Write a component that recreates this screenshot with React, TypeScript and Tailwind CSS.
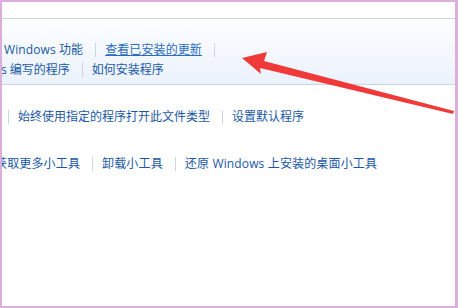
const FONT = { fontFamily: '"Open Sans", "Noto Sans CJK SC", sans-serif' };

function Sep() {
  return <span className="ml-[12px] mr-[9px] inline-block h-[14px] w-px shrink-0 bg-[#cdd4de]" />;
}

function Link({ children, under }: { children: React.ReactNode; under?: boolean }) {
  return (
    <span className={under ? 'shrink-0 text-[#2a6cc0] underline underline-offset-1' : 'shrink-0 text-[#1a58a6]'}>
      {children}
    </span>
  );
}

export default function App() {
  return (
    <div className="relative h-[308px] w-[458px] overflow-hidden border-b-2 border-l-2 border-r-[3px] border-t-2 border-[#dcaedc] bg-white text-[12px] leading-[20px]" style={FONT}>
      <div className="h-[17px] border-b border-[#c9d4e4] bg-white" />

      <div className="h-[66px] overflow-hidden border-b border-[#c9d4e4] bg-gradient-to-b from-[#fdfeff] to-[#ebf2fc] pt-[21px]">
        <div className="flex items-center whitespace-nowrap pl-[2px] tracking-[0.1px]">
          <Link>Windows 功能</Link>
          <Sep />
          <Link under>查看已安装的更新</Link>
          <Sep />
        </div>
        <div className="-ml-[1px] flex items-center whitespace-nowrap">
          <Link>s 编写的程序</Link>
          <Sep />
          <Link>如何安装程序</Link>
        </div>
      </div>

      <div className="overflow-hidden pt-[22px]">
        <div className="flex items-center whitespace-nowrap pl-[6px]">
          <span className="mr-[9px] inline-block h-[14px] w-px bg-[#cdd4de]" />
          <Link>始终使用指定的程序打开此文件类型</Link>
          <Sep />
          <Link>设置默认程序</Link>
        </div>
        <div className="mt-[27px] flex items-center whitespace-nowrap tracking-[0.15px]">
          <span className="-ml-[7px] flex items-center">
            <Link>获取更多小工具</Link>
          </span>
          <Sep />
          <Link>卸载小工具</Link>
          <Sep />
          <Link>还原 Windows 上安装的桌面小工具</Link>
        </div>
      </div>

      <svg className="pointer-events-none absolute -left-[2px] -top-[2px]" width="458" height="308" viewBox="0 0 458 308">
        <polygon
          points="242,58 267,52 264,61 454,111 453,114 260,68 261,74"
          fill="#f03a3a"
        />
      </svg>
    </div>
  );
}
